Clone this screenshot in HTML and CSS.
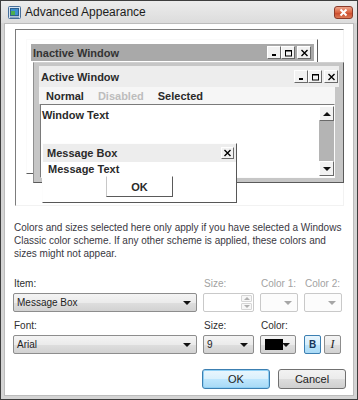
FILE: index.html
```html
<!doctype html>
<html lang="en">
<head>
    <meta charset="UTF-8">
    <title>Advanced Appearance</title>
    <link rel="stylesheet" href="styles.css">
</head>
<body>
<div class="window">
    <div class="titlebar">
        <svg class="app-icon" viewBox="0 0 13 13">
            <rect x="0.5" y="0.5" width="12" height="12" rx="1" fill="#d6e4f2" stroke="#476f9a"/>
            <rect x="2.5" y="2.5" width="8" height="7" fill="#3d8fcf" stroke="#2c5f8f"/>
            <rect x="3" y="5" width="4" height="4" fill="#4cae4f"/>
            <rect x="2" y="10.5" width="9" height="1.5" fill="#8aa4bf"/>
        </svg>
        <span class="title">Advanced Appearance</span>
        <span class="close">
            <svg viewBox="0 0 19 13" width="19" height="13">
                <path d="M6.5 3.5 L12.5 9.5 M12.5 3.5 L6.5 9.5" stroke="#fff" stroke-width="2"/>
            </svg>
        </span>
    </div>
    <div class="body">
        <div class="preview">
            <div class="inactive">
                <div class="caption inactive-cap">
                    <span class="cap-text">Inactive Window</span>
                    <span class="cap-btns">
                        <span class="cbtn"><svg viewBox="0 0 9 8"><rect x="2" y="5" width="4" height="2" fill="#000"/></svg></span>
                        <span class="cbtn"><svg viewBox="0 0 9 8"><rect x="1.5" y="1.5" width="6" height="5.5" fill="none" stroke="#000"/><rect x="1" y="1" width="7" height="1.5" fill="#000"/></svg></span>
                        <span class="cbtn gap"><svg viewBox="0 0 9 8"><path d="M1.5 1 L7.5 7 M7.5 1 L1.5 7" stroke="#000" stroke-width="1.4"/></svg></span>
                    </span>
                </div>
            </div>

            <div class="active">
                <div class="caption active-cap">
                    <span class="cap-text">Active Window</span>
                    <span class="cap-btns">
                        <span class="cbtn"><svg viewBox="0 0 9 8"><rect x="2" y="5" width="4" height="2" fill="#000"/></svg></span>
                        <span class="cbtn"><svg viewBox="0 0 9 8"><rect x="1.5" y="1.5" width="6" height="5.5" fill="none" stroke="#000"/><rect x="1" y="1" width="7" height="1.5" fill="#000"/></svg></span>
                        <span class="cbtn gap"><svg viewBox="0 0 9 8"><path d="M1.5 1 L7.5 7 M7.5 1 L1.5 7" stroke="#000" stroke-width="1.4"/></svg></span>
                    </span>
                </div>
                <div class="menu">
                    <span>Normal</span>
                    <span class="disabled">Disabled</span>
                    <span>Selected</span>
                </div>
                <div class="textarea">
                    <span class="wtext">Window Text</span>
                    <div class="scrollbar">
                        <span class="sbtn"><span class="tri-up"></span></span>
                        <span class="track"></span>
                        <span class="sbtn"><span class="tri-down"></span></span>
                    </div>
                </div>
            </div>

            <div class="msgbox">
                <div class="caption msg-cap">
                    <span class="cap-text">Message Box</span>
                    <span class="cbtn"><svg viewBox="0 0 9 8"><path d="M1.5 1 L7.5 7 M7.5 1 L1.5 7" stroke="#000" stroke-width="1.4"/></svg></span>
                </div>
                <div class="msg-text">Message Text</div>
                <div class="msg-ok">OK</div>
            </div>
        </div>

        <p class="note">Colors and sizes selected here only apply if you have selected a Windows<br>
            Classic color scheme. If any other scheme is applied, these colors and<br>
            sizes might not appear.</p>

        <div class="fields">
            <span class="lbl">Item:</span>
            <span class="lbl off">Size:</span>
            <span class="lbl off">Color 1:</span>
            <span class="lbl off">Color 2:</span>

            <div class="select">Message Box<span class="arrow"></span></div>
            <div class="spin">
                <span class="spin-btns">
                    <span class="sp"><span class="tri-up small"></span></span>
                    <span class="sp"><span class="tri-down small"></span></span>
                </span>
            </div>
            <div class="select off"><span class="arrow"></span></div>
            <div class="select off"><span class="arrow"></span></div>

            <span class="lbl row2">Font:</span>
            <span class="lbl row2">Size:</span>
            <span class="lbl row2">Color:</span>
            <span class="lbl row2"></span>

            <div class="select">Arial<span class="arrow"></span></div>
            <div class="select">9<span class="arrow"></span></div>
            <div class="select color"><span class="swatch"></span><span class="arrow"></span></div>
            <div class="styles">
                <span class="tbtn bold on">B</span>
                <span class="tbtn italic">I</span>
            </div>
        </div>

        <div class="actions">
            <span class="btn default">OK</span>
            <span class="btn">Cancel</span>
        </div>
    </div>
</div>
</body>
</html>
```

FILE: styles.css
```css
* {
    box-sizing: border-box;
}

body {
    margin: 0;
    font-family: "Liberation Sans", Arial, sans-serif;
}

.window {
    width: 358px;
    height: 400px;
    border: 1px solid #3e3e3e;
    background: #d4d4d4;
    display: flex;
    flex-direction: column;
}

.titlebar {
    height: 22px;
    flex: none;
    display: flex;
    align-items: center;
    padding: 0 4px 0 7px;
    background: linear-gradient(#ececec, #dcdcdc);
}

.app-icon {
    width: 13px;
    height: 13px;
    margin-right: 4px;
}

.title {
    flex: 1;
    font-size: 12px;
    color: #1c1c1c;
}

.close {
    width: 19px;
    height: 13px;
    border: 1px solid #8c3b2a;
    border-radius: 3px;
    background: linear-gradient(#eea58b, #d9623f 50%, #c9472a 51%, #dc7a56);
    display: flex;
}

.close svg {
    margin: -1px;
}

.body {
    flex: 1;
    min-height: 0;
    margin: 0 3px 3px;
    background: #fff;
    border: 1px solid #bcbcbc;
}

/* preview of the classic window parts */

.preview {
    position: relative;
    width: 329px;
    height: 177px;
    margin: 5px 0 0 10px;
    border: 1px solid;
    border-color: #7c7c7c #f2f2f2 #f2f2f2 #7c7c7c;
}

.caption {
    display: flex;
    align-items: center;
    font-size: 11px;
    font-weight: bold;
    color: #2a2a2a;
}

.cap-text {
    flex: 1;
}

.cap-btns {
    display: flex;
}

.cbtn {
    width: 14px;
    height: 13px;
    display: flex;
    align-items: center;
    justify-content: center;
    background: #f2f2f2;
    border: 1px solid;
    border-color: #fff #6a6a6a #6a6a6a #fff;
}

.cbtn svg {
    width: 9px;
    height: 8px;
}

.cbtn.gap {
    margin-left: 2px;
}

.inactive {
    width: 292px;
    height: 135px;
    margin: 9px 0 0 10px;
    padding: 4px 3px 0 4px;
    border: 1px solid;
    border-color: #fafafa #5e5e5e #5e5e5e #fafafa;
}

.inactive-cap {
    height: 17px;
    padding: 0 3px 0 2px;
    background: #a9a9a9;
    color: #333;
}

.active {
    position: absolute;
    left: 17px;
    top: 32px;
    width: 311px;
    height: 121px;
    padding: 3px 4px 4px 5px;
    border: 1px solid;
    border-color: #d0d0d0 #5a5a5a #5a5a5a #8f8f8f;
    background: #c6c6c6;
    display: flex;
    flex-direction: column;
}

.active-cap {
    height: 21px;
    padding: 0 1px 0 2px;
    background: #ededed;
}

.menu {
    height: 17px;
    margin-right: 4px;
    display: flex;
    align-items: center;
    gap: 14px;
    padding-left: 7px;
    font-size: 11px;
    font-weight: bold;
    color: #2a2a2a;
    background: #f6f6f6;
}

.menu .disabled {
    color: #bdbdbd;
}

.textarea {
    flex: 1;
    margin: 0 4px 0 1px;
    border: 1px solid;
    border-color: #7a7a7a #fbfbfb #fbfbfb #7a7a7a;
    background: #fff;
    display: flex;
    padding: 1px 0 1px 1px;
}

.wtext {
    flex: 1;
    font-size: 11px;
    font-weight: bold;
    color: #2a2a2a;
    line-height: 18px;
}

.scrollbar {
    width: 15px;
    display: flex;
    flex-direction: column;
}

.sbtn {
    height: 15px;
    display: flex;
    align-items: center;
    justify-content: center;
    background: #f2f2f2;
    border: 1px solid;
    border-color: #fff #6a6a6a #6a6a6a #fff;
}

.track {
    flex: 1;
    background: #b4b4b4;
}

.tri-up {
    border: 4px solid transparent;
    border-top: 0;
    border-bottom: 4px solid #111;
}

.tri-down {
    border: 4px solid transparent;
    border-bottom: 0;
    border-top: 4px solid #111;
}

.msgbox {
    position: absolute;
    left: 26px;
    top: 113px;
    width: 195px;
    height: 60px;
    background: #fff;
    border: 1px solid;
    border-color: #fdfdfd #575757 #575757 #fdfdfd;
}

.msg-cap {
    height: 18px;
    padding: 0 2px 0 4px;
    background: #ededed;
}

.msg-cap .cbtn {
    width: 13px;
    height: 12px;
}

.msg-text {
    font-size: 11px;
    font-weight: bold;
    color: #2a2a2a;
    line-height: 13px;
    padding: 1px 0 0 5px;
}

.msg-ok {
    width: 67px;
    height: 21px;
    margin-left: 63px;
    border: 1px solid;
    border-color: #fff #5a5a5a #5a5a5a #c8c8c8;
    font-size: 11px;
    font-weight: bold;
    color: #2a2a2a;
    display: flex;
    align-items: center;
    justify-content: center;
}

/* explanation and settings */

.note {
    margin: 15px 0 0 9px;
    font-size: 10px;
    line-height: 13px;
    white-space: nowrap;
    color: #3a383f;
}

.fields {
    margin: 17px 0 0 8px;
    display: grid;
    grid-template-columns: 184px 51px 38px 38px;
    column-gap: 6px;
    font-size: 10px;
    color: #2e2e2e;
}

.lbl {
    height: 13px;
    line-height: 13px;
    margin-bottom: 3px;
    padding-left: 1px;
    white-space: nowrap;
}

.lbl.off {
    color: #a2a2a2;
}

.lbl.row2 {
    margin-top: 7px;
}

.select {
    position: relative;
    height: 19px;
    line-height: 17px;
    padding-left: 3px;
    border: 1px solid #8d8d8d;
    border-radius: 2px;
    background: linear-gradient(#f4f4f4, #ebebeb 50%, #dedede 51%, #d2d2d2);
    color: #1e1e1e;
}

.arrow {
    position: absolute;
    right: 5px;
    top: 7px;
    border: 4px solid transparent;
    border-bottom: 0;
    border-top: 4px solid #111;
}

.select.off {
    border-color: #c9c9c9;
    background: #fcfcfc;
}

.select.off .arrow {
    border-top-color: #a6a6a6;
}

.spin {
    height: 19px;
    border: 1px solid #c9c9c9;
    border-radius: 2px;
    display: flex;
    justify-content: flex-end;
    padding: 1px;
}

.spin-btns {
    width: 11px;
    display: flex;
    flex-direction: column;
    gap: 1px;
}

.sp {
    flex: 1;
    display: flex;
    align-items: center;
    justify-content: center;
    border: 1px solid #d6d6d6;
    border-radius: 1px;
    background: #f7f7f7;
}

.tri-up.small {
    border-width: 0 3px 3px;
    border-bottom-color: #b0b0b0;
}

.tri-down.small {
    border-width: 3px 3px 0;
    border-top-color: #b0b0b0;
}

.select.color {
    width: 36px;
}

.swatch {
    position: absolute;
    left: 4px;
    top: 3px;
    width: 18px;
    height: 11px;
    background: #000;
}

.styles {
    display: flex;
    gap: 3px;
}

.tbtn {
    width: 17px;
    height: 19px;
    border: 1px solid #8d8d8d;
    border-radius: 2px;
    background: linear-gradient(#f4f4f4, #ebebeb 50%, #dedede 51%, #d2d2d2);
    display: flex;
    align-items: center;
    justify-content: center;
    color: #1e1e1e;
}

.tbtn.on {
    border-color: #3c7fb1;
    background: linear-gradient(#e8f5fd, #d4eefc 50%, #bde4fa 51%, #a9daf6);
}

.tbtn.bold {
    font-weight: bold;
    font-size: 10px;
    color: #16345a;
}

.tbtn.italic {
    font-family: "Liberation Serif", serif;
    font-style: italic;
    font-size: 12px;
}

.actions {
    margin-top: 15px;
    padding-right: 7px;
    display: flex;
    justify-content: flex-end;
    gap: 8px;
}

.btn {
    width: 68px;
    height: 20px;
    border: 1px solid #707070;
    border-radius: 3px;
    background: linear-gradient(#f2f2f2, #ebebeb 50%, #dddddd 51%, #cfcfcf);
    font-size: 11px;
    color: #222;
    display: flex;
    align-items: center;
    justify-content: center;
}

.btn.default {
    border-color: #3c7fb1;
    background: linear-gradient(#eaf6fd, #d9f0fc 50%, #bee6fd 51%, #a7d9f5);
    box-shadow: inset 0 0 0 1px #8fd0f5;
}
```
